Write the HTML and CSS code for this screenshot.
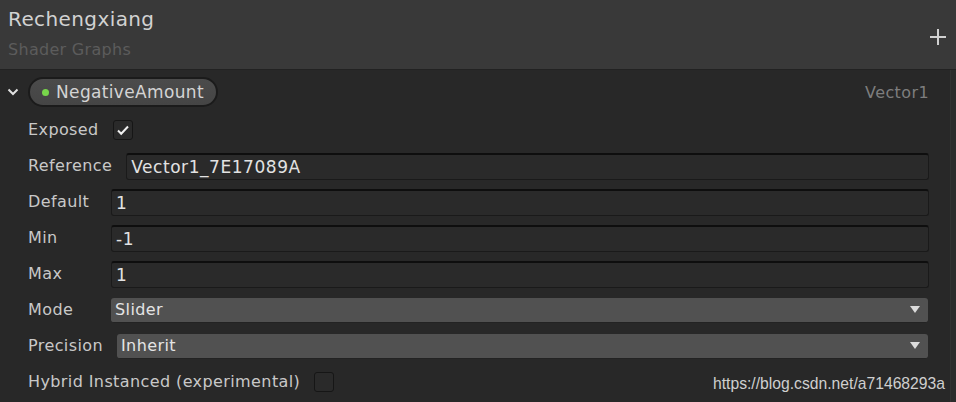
FILE: index.html
```html
<!DOCTYPE html>
<html>
<head>
<meta charset="utf-8">
<link rel="stylesheet" href="styles.css">
</head>
<body>
<div class="app">
  <header class="header">
    <div class="titles">
      <div class="title">Rechengxiang</div>
      <div class="subtitle">Shader Graphs</div>
    </div>
    <svg class="plus" width="18" height="18" viewBox="0 0 18 18"><path d="M9 1v16M1 9h16" stroke="#d0d0d0" stroke-width="2"/></svg>
  </header>
  <main class="panel">
    <div class="prop-head">
      <svg class="chev" width="12" height="8" viewBox="0 0 12 8"><path d="M1.5 1.5l4.5 4.5 4.5-4.5" stroke="#e0e0e0" stroke-width="2" fill="none"/></svg>
      <div class="pill"><span class="dot"></span><span class="pill-text">NegativeAmount</span></div>
      <div class="type">Vector1</div>
    </div>
    <div class="row">
      <div class="label">Exposed</div>
      <div class="check"><svg width="14" height="12" viewBox="0 0 14 12"><path d="M2 6.5l3.2 3.2L12 2.5" stroke="#f0f0f0" stroke-width="2" fill="none"/></svg></div>
    </div>
    <div class="row">
      <div class="label">Reference</div>
      <div class="input">Vector1_7E17089A</div>
    </div>
    <div class="row">
      <div class="label">Default</div>
      <div class="input">1</div>
    </div>
    <div class="row">
      <div class="label">Min</div>
      <div class="input">-1</div>
    </div>
    <div class="row">
      <div class="label">Max</div>
      <div class="input">1</div>
    </div>
    <div class="row">
      <div class="label">Mode</div>
      <div class="select"><span>Slider</span><span class="arrow"></span></div>
    </div>
    <div class="row">
      <div class="label">Precision</div>
      <div class="select"><span>Inherit</span><span class="arrow"></span></div>
    </div>
    <div class="row">
      <div class="label">Hybrid Instanced (experimental)</div>
      <div class="check"></div>
    </div>
    <div class="watermark">https://blog.csdn.net/a71468293a</div>
  </main>
</div>
</body>
</html>
```
FILE: styles.css
```css
* { box-sizing: border-box; }
html, body { margin: 0; padding: 0; }
body {
  width: 956px;
  height: 402px;
  overflow: hidden;
  background: #2c2c2c;
  font-family: "DejaVu Sans", sans-serif;
}
.app { width: 956px; height: 402px; display: flex; flex-direction: column; }
.header {
  height: 70px;
  background: #393939;
  border-bottom: 1px solid #222222;
  display: flex;
  justify-content: space-between;
  align-items: flex-start;
  padding: 6px 9px 0 8px;
}
.title { color: #d2d2d2; font-size: 20px; line-height: 26px; letter-spacing: 0.4px; }
.subtitle { color: #5c5c5c; font-size: 16px; line-height: 20px; margin-top: 8px; letter-spacing: 0.3px; }
.plus { margin-top: 22px; }
.panel {
  position: relative;
  flex: 1;
  width: 951px;
  background: #282828;
  border-right: 1px solid #333333;
}
.prop-head {
  height: 42px;
  display: flex;
  align-items: center;
  padding: 0 21px 0 7px;
}
.chev { margin-right: 9px; margin-top: 2px; }
.pill {
  height: 30px;
  display: flex;
  align-items: center;
  padding: 0 12px 0 12px;
  border-radius: 15px;
  background: linear-gradient(#4b4b4b, #454545);
  border: 2px solid #1b1b1b;
  margin-top: 2px;
}
.dot { width: 7px; height: 7px; border-radius: 50%; background: #78d64b; margin-right: 7px; }
.pill-text { color: #d4d4d4; font-size: 17px; letter-spacing: 0.35px; }
.type { margin-left: auto; color: #7e7e7e; font-size: 16px; margin-top: 2px; letter-spacing: 0.4px; }
.row {
  height: 36px;
  display: flex;
  align-items: center;
  padding: 0 21px 0 28px;
}
.label {
  color: #c8c8c8;
  font-size: 16px;
  letter-spacing: 0.4px;
  min-width: 83px;
  padding-right: 14px;
  white-space: nowrap;
  margin-top: -1px;
}
.check {
  width: 20px;
  height: 20px;
  border-radius: 3px;
  background: #2a2a2a;
  border: 1px solid #161616;
  display: flex;
  align-items: center;
  justify-content: center;
}
.input {
  flex: 1;
  height: 27px;
  background: #2a2a2a;
  border: 1px solid #1a1a1a;
  border-top: 2px solid #0e0e0e;
  border-radius: 3px;
  color: #e2e2e2;
  font-size: 17px;
  letter-spacing: 0.55px;
  padding-left: 4px;
  display: flex;
  align-items: center;
}
.select {
  flex: 1;
  height: 25px;
  background: #515151;
  border-radius: 3px;
  border-bottom: 1px solid #232323;
  color: #e4e4e4;
  font-size: 16px;
  letter-spacing: 0.4px;
  padding: 0 8px 0 4px;
  margin-right: 1px;
  display: flex;
  align-items: center;
  justify-content: space-between;
}
.arrow {
  width: 0; height: 0;
  border-left: 5px solid transparent;
  border-right: 5px solid transparent;
  border-top: 7px solid #dcdcdc;
}
.watermark {
  position: absolute;
  right: 5px;
  bottom: 9px;
  color: #cfcfcf;
  font-family: "Liberation Sans", Arial, sans-serif;
  font-size: 15.7px;
}
```
